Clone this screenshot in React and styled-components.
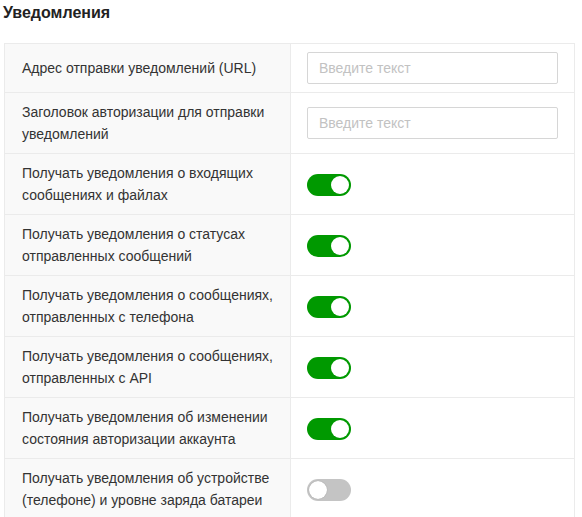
import React from "react";
import styled, { createGlobalStyle } from "styled-components";

const Global = createGlobalStyle`
  html, body { margin: 0; padding: 0; background: #fff; }
  body { font-family: "Liberation Sans", Arial, sans-serif; color: #333; }
`;

const Page = styled.div`
  padding: 0 7px 0 4px;
`;

const Title = styled.h2`
  margin: 0;
  padding: 3px 0 0 0;
  margin-left: -1px;
  font-size: 16px;
  line-height: 20px;
  font-weight: 700;
  color: #222;
  height: 43px;
  box-sizing: border-box;
`;

const Table = styled.div`
  border: 1px solid #ebebeb;
  border-bottom: none;
  display: grid;
  grid-template-columns: 286px 1fr;
`;

const LabelCell = styled.div`
  background: #f9f9f9;
  border-right: 1px solid #ebebeb;
  border-bottom: 1px solid #ebebeb;
  padding: 8px 6px 8px 17px;
  display: flex;
  align-items: center;
  font-size: 14px;
  line-height: 22px;
  color: #333;
  min-height: ${(p) => (p.$tall ? "44px" : "32px")};
`;

const ControlCell = styled.div`
  border-bottom: 1px solid #ebebeb;
  padding: 8px 16px 8px 16px;
  display: flex;
  align-items: center;
`;

const Input = styled.input`
  width: 100%;
  height: 32px;
  box-sizing: border-box;
  border: 1px solid #d6d6d6;
  border-radius: 2px;
  padding: 0 11px;
  font-family: "Liberation Sans", Arial, sans-serif;
  font-size: 14px;
  color: #333;
  outline: none;
  &::placeholder { color: #c2c2c2; }
`;

const Switch = styled.span`
  position: relative;
  display: inline-block;
  width: 44px;
  height: 22px;
  border-radius: 11px;
  background: ${(p) => (p.$on ? "#009900" : "#c4c4c4")};
  margin-top: 2px;
`;

const Knob = styled.span`
  position: absolute;
  top: 2px;
  left: ${(p) => (p.$on ? "24px" : "2px")};
  width: 18px;
  height: 18px;
  border-radius: 50%;
  background: #fff;
  box-shadow: ${(p) => (p.$on ? "none" : "0 0 1px rgba(0,0,0,0.3)")};
`;

const rows = [
  { label: "Адрес отправки уведомлений (URL)", type: "input" },
  { label: "Заголовок авторизации для отправки уведомлений", type: "input", tall: true },
  { label: "Получать уведомления о входящих сообщениях и файлах", type: "switch", on: true },
  { label: "Получать уведомления о статусах отправленных сообщений", type: "switch", on: true },
  { label: "Получать уведомления о сообщениях, отправленных с телефона", type: "switch", on: true },
  { label: "Получать уведомления о сообщениях, отправленных с API", type: "switch", on: true },
  { label: "Получать уведомления об изменении состояния авторизации аккаунта", type: "switch", on: true },
  { label: "Получать уведомления об устройстве (телефоне) и уровне заряда батареи", type: "switch", on: false },
];

export default function App() {
  return (
    <Page>
      <Global />
      <Title>Уведомления</Title>
      <Table>
        {rows.map((r, i) => (
          <React.Fragment key={i}>
            <LabelCell $tall={r.tall || r.type === "switch"}>{r.label}</LabelCell>
            <ControlCell>
              {r.type === "input" ? (
                <Input placeholder="Введите текст" />
              ) : (
                <Switch $on={r.on}>
                  <Knob $on={r.on} />
                </Switch>
              )}
            </ControlCell>
          </React.Fragment>
        ))}
      </Table>
    </Page>
  );
}
